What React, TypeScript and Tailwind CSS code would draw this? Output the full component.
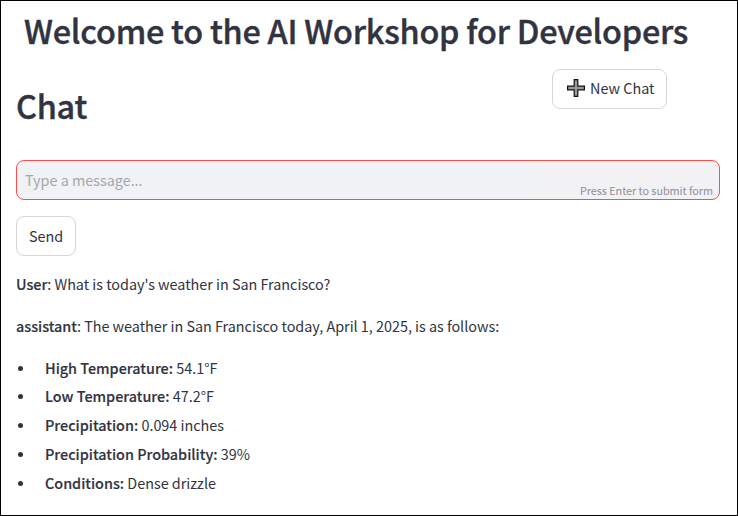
const items = [
  { label: 'High Temperature:', value: '54.1°F' },
  { label: 'Low Temperature:', value: '47.2°F' },
  { label: 'Precipitation:', value: '0.094 inches' },
  { label: 'Precipitation Probability:', value: '39%' },
  { label: 'Conditions:', value: 'Dense drizzle' },
];

function PlusIcon() {
  return (
    <svg width="18" height="18" viewBox="0 0 18 18" className="shrink-0">
      <path d="M7.2 .6h3.6v6.6h6.6v3.6h-6.6v6.6H7.2v-6.6H.6V7.2h6.6z" fill="#999" stroke="#111" strokeWidth="1.2" />
    </svg>
  );
}

export default function App() {
  return (
    <main className="h-[516px] w-[738px] overflow-hidden border border-black bg-white px-[15px] font-['Noto_Sans_CJK_JP',sans-serif] text-[14.4px] whitespace-nowrap text-[#31333f]">
      <h1 className="mt-2 pl-[8px] text-[32.4px] leading-[42px] font-medium tracking-[-0.226px] [-webkit-text-stroke:0.4px_#31333f]">Welcome to the AI Workshop for Developers</h1>
      <div className="mt-[17px] flex h-[76px] items-start justify-between pr-[54px]">
        <h2 className="mt-[16px] text-[32.4px] leading-[42px] font-medium tracking-[-0.226px] [-webkit-text-stroke:0.4px_#31333f]">Chat</h2>
        <button className="mt-px mr-px flex h-10 w-[115px] items-center gap-[5px] rounded-lg border border-[#d6d6d9] pb-[2px] pl-[14px]">
          <PlusIcon />
          <span>New Chat</span>
        </button>
      </div>
      <form className="mt-[16px]">
        <div className="flex h-10 w-[704px] justify-between rounded-lg border border-[#ff4b4b] bg-linear-to-r from-[#f0f2f6] from-70% to-[#f2f2f4] to-75% pr-[6px] pl-2">
          <span className="leading-[38px] tracking-[-0.01px] text-[#a6a7ab]">Type a message...</span>
          <span className="mt-[20px] text-[10.8px] leading-[18px] tracking-[-0.02px] text-[#8f9096]">Press Enter to submit form</span>
        </div>
        <button className="mt-4 flex h-10 w-[60px] items-center justify-center rounded-lg border border-[#d6d6d9]">Send</button>
      </form>
      <p className="mt-[15px] leading-[26px] tracking-[-0.02px]"><strong className="font-medium [-webkit-text-stroke:0.15px_#31333f]">User</strong>: What is today's weather in San Francisco?</p>
      <p className="mt-4 leading-[26px] tracking-[-0.02px]"><strong className="font-medium [-webkit-text-stroke:0.15px_#31333f]">assistant</strong>: The weather in San Francisco today, April 1, 2025, is as follows:</p>
      <ul className="mt-[14.25px]">
        {items.map((item) => (
          <li key={item.label} className="flex h-[28.75px] items-center leading-[26px] tracking-[-0.01px]">
            <span className="mt-px mr-[22px] ml-[2px] size-[5px] rounded-full bg-[#31333f]" />
            <span><strong className="font-medium [-webkit-text-stroke:0.15px_#31333f]">{item.label}</strong> {item.value}</span>
          </li>
        ))}
      </ul>
    </main>
  );
}
